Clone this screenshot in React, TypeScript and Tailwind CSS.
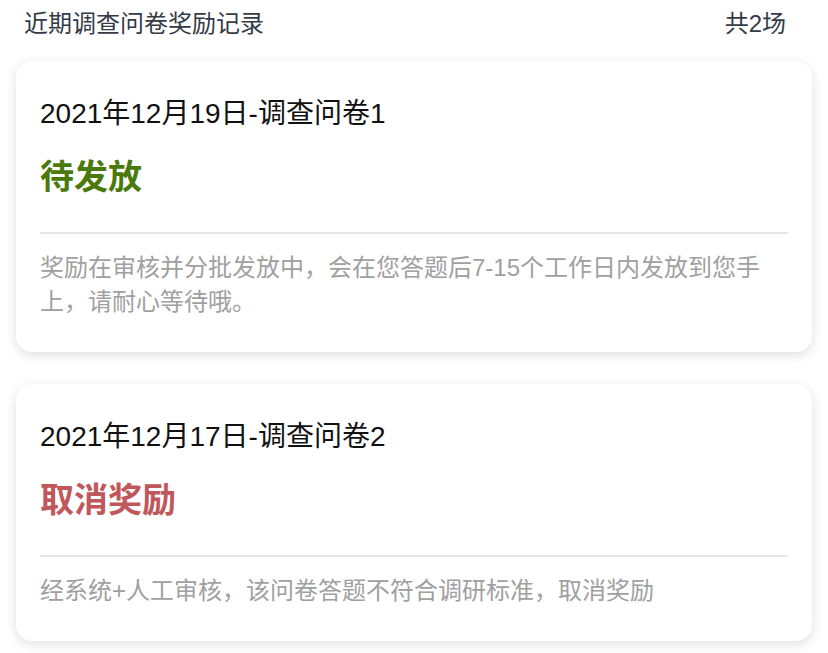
import React from "react";

type Record = {
  title: string;
  status: string;
  tone: "pending" | "cancelled";
  note: React.ReactNode;
};

const records: Record[] = [
  {
    title: "2021年12月19日-调查问卷1",
    status: "待发放",
    tone: "pending",
    note: "奖励在审核并分批发放中，会在您答题后7-15个工作日内发放到您手上，请耐心等待哦。",
  },
  {
    title: "2021年12月17日-调查问卷2",
    status: "取消奖励",
    tone: "cancelled",
    note: "经系统+人工审核，该问卷答题不符合调研标准，取消奖励",
  },
];

function RewardCard({ item }: { item: Record }) {
  return (
    <div className="rounded-[16px] bg-white px-[24px] pt-[35px] pb-[33px] shadow-[0_3px_12px_rgba(0,0,0,0.13)]">
      <div className="text-[28px] leading-[36px] text-[#111]">{item.title}</div>
      <div
        className={
          item.tone === "pending"
            ? "mt-[21px] text-[34px] font-semibold leading-[48px] text-[#4b7a0c]"
            : "mt-[21px] text-[34px] font-semibold leading-[48px] text-[#c0585b]"
        }
      >
        {item.status}
      </div>
      <div className="mt-[31px] h-[2px] bg-[#e6e6e6]" />
      <p className="mt-[17px] pr-[14px] text-[24px] leading-[34px] text-[#a0a0a0]">{item.note}</p>
    </div>
  );
}

export default function App() {
  return (
    <div className="min-h-screen bg-white font-['Liberation_Sans','Noto_Sans_CJK_SC',sans-serif]">
      <div className="flex items-center justify-between pl-[24px] pr-[42px] pt-[6px] text-[24px] leading-[36px] text-[#343b46]">
        <span>近期调查问卷奖励记录</span>
        <span>共2场</span>
      </div>
      <div className="mt-[19px] flex flex-col gap-[32px] px-[16px]">
        {records.map((r) => (
          <RewardCard key={r.title} item={r} />
        ))}
      </div>
    </div>
  );
}
